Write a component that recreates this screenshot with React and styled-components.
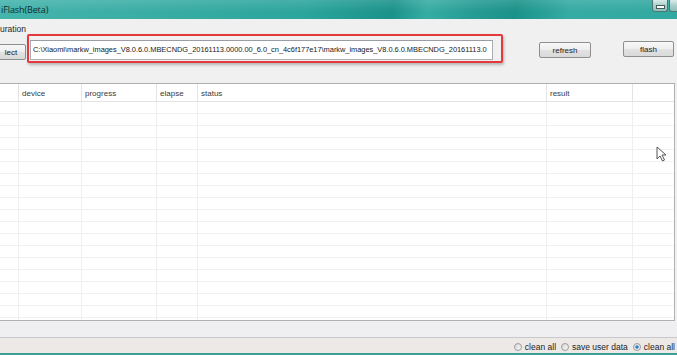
import React from "react";
import styled, { createGlobalStyle } from "styled-components";

const Global = createGlobalStyle`
  html, body { margin: 0; padding: 0; background: #f0f0f0; }
  body { font-family: "Liberation Sans", Arial, sans-serif; }
`;

const columns = [
  { w: 19, label: "" },
  { w: 63, label: "device" },
  { w: 75, label: "progress" },
  { w: 41, label: "elapse" },
  { w: 349, label: "status" },
  { w: 86, label: "result" },
  { w: 0, label: "" },
];
const template = columns.map((c) => (c.w ? `${c.w}px` : "1fr")).join(" ");
const rows = Array.from({ length: 19 });

export default function App() {
  return (
    <Window>
      <Global />
      <TitleBar>
        <Title>iFlash(Beta)</Title>
        <Controls>
          <CtrlButton>
            <MinGlyph />
          </CtrlButton>
          <CtrlButton narrow />
        </Controls>
      </TitleBar>
      <MenuBar>
        <MenuItem>uration</MenuItem>
      </MenuBar>
      <Toolbar>
        <Button width={30} top={10} left={-4}>lect</Button>
        <Highlight>
          <PathBox>
            C:\Xiaomi\markw_images_V8.0.6.0.MBECNDG_20161113.0000.00_6.0_cn_4c6f177e17\markw_images_V8.0.6.0.MBECNDG_20161113.0
          </PathBox>
        </Highlight>
        <Button width={52} top={8} left={36}>refresh</Button>
        <Button width={51} top={7} left={32}>flash</Button>
      </Toolbar>
      <Table>
        <HeaderRow>
          {columns.map((c, i) => (
            <HeadCell key={i} last={i === columns.length - 1}>{c.label}</HeadCell>
          ))}
        </HeaderRow>
        {rows.map((_, r) => (
          <Row key={r}>
            {columns.map((c, i) => (
              <Cell key={i} last={i === columns.length - 1} />
            ))}
          </Row>
        ))}
      </Table>
      <Band />
      <StatusBar>
        <Option>
          <Radio />
          clean all
        </Option>
        <Option>
          <Radio />
          save user data
        </Option>
        <Option>
          <Radio checked />
          clean all
        </Option>
      </StatusBar>
      <BottomEdge />
      <Cursor width="11" height="16" viewBox="0 0 11 16">
        <path d="M1 1 L1 13 L4 10 L6.5 15 L8.5 14 L6 9 L10 9 Z" fill="#fff" stroke="#555" strokeWidth="1" strokeLinejoin="round" />
      </Cursor>
    </Window>
  );
}

const Window = styled.div`
  position: relative;
  width: 677px;
  height: 355px;
  overflow: hidden;
  display: flex;
  flex-direction: column;
  background: #f0f0f0;
`;

const TitleBar = styled.div`
  height: 19px;
  flex: none;
  display: flex;
  align-items: flex-start;
  background:
    linear-gradient(180deg, rgba(255,255,255,0.12) 0%, rgba(255,255,255,0) 60%),
    linear-gradient(100deg, #45b4ac 0%, #38aca3 25%, #2ca59c 45%, #1a928a 58%, #37aca3 63%, #269b93 70%, #1b9289 76%, #35aba3 84%, #31a8a0 100%);
`;

const Title = styled.span`
  font-family: "Open Sans", "Liberation Sans", sans-serif;
  font-size: 9px;
  color: #0f2d2a;
  line-height: 19px;
  padding-left: 1px;
  letter-spacing: -0.1px;
`;

const Controls = styled.div`
  margin-left: auto;
  display: flex;
  gap: 1px;
  margin-right: -4px;
`;

const CtrlButton = styled.div`
  width: ${(p) => (p.narrow ? 12 : 16)}px;
  height: 12px;
  box-sizing: border-box;
  border: 1px solid #4f7672;
  border-top: none;
  border-radius: 0 0 3px 3px;
  background: linear-gradient(180deg, #d9ecea 0%, #a9cfcb 50%, #8fbeb9 100%);
  display: flex;
  align-items: center;
  justify-content: center;
`;

const MinGlyph = styled.span`
  width: 7px;
  height: 2px;
  background: #fff;
  border: 1px solid #44605d;
  margin-top: 2px;
`;

const MenuBar = styled.div`
  height: 15px;
  flex: none;
  display: flex;
  align-items: center;
  background: #f0f0f0;
`;

const MenuItem = styled.span`
  font-size: 8.5px;
  color: #1e1e1e;
  margin-top: 4px;
`;

const Toolbar = styled.div`
  height: 50px;
  flex: none;
  display: flex;
  align-items: flex-start;
  border-bottom: 1px solid #e6e6e6;
  box-sizing: border-box;
`;

const Button = styled.div`
  flex: none;
  width: ${(p) => p.width}px;
  height: 16px;
  margin-top: ${(p) => p.top}px;
  margin-left: ${(p) => p.left}px;
  box-sizing: border-box;
  border: 1px solid #8e8f8f;
  border-radius: 2px;
  background: linear-gradient(180deg, #f8f8f8 0%, #eeeeee 48%, #e2e2e2 52%, #d9d9d9 100%);
  font-size: 8px;
  color: #222;
  display: flex;
  align-items: center;
  justify-content: center;
  padding-top: 1px;
`;

const Highlight = styled.div`
  flex: none;
  width: 476px;
  height: 29px;
  margin-left: 1px;
  box-sizing: border-box;
  border: 2px solid #e4383d;
  border-radius: 2px;
  padding: 4px 8px 1px 1px;
  box-shadow: 1px 2px 3px rgba(0, 0, 0, 0.25);
  background: #f0f0f0;
`;

const PathBox = styled.div`
  height: 20px;
  box-sizing: border-box;
  border: 1px solid #abadb3;
  border-top-color: #9a9da3;
  background: #fff;
  font-size: 7.45px;
  letter-spacing: -0.03px;
  color: #1a1a1a;
  line-height: 18px;
  padding-left: 2px;
  white-space: nowrap;
  overflow: hidden;
`;

const Table = styled.div`
  margin-top: -1px;
  margin-left: -1px;
  margin-right: 2px;
  height: 238px;
  flex: none;
  box-sizing: border-box;
  border: 1px solid #b0b0b0;
  background: #fff;
  overflow: hidden;
`;

const HeaderRow = styled.div`
  display: grid;
  grid-template-columns: ${template};
  height: 18px;
  border-bottom: 1px solid #e3e3e3;
  box-sizing: border-box;
`;

const HeadCell = styled.div`
  font-size: 8px;
  color: #3a3a3a;
  padding: 1px 0 0 3px;
  line-height: 17px;
  border-right: ${(p) => (p.last ? "none" : "1px solid #e4e4e4")};
`;

const Row = styled.div`
  display: grid;
  grid-template-columns: ${template};
  height: 12px;
  border-bottom: 1px solid #f1f1f4;
  box-sizing: border-box;
`;

const Cell = styled.div`
  border-right: ${(p) => (p.last ? "none" : "1px solid #efeff2")};
`;

const Band = styled.div`
  height: 17px;
  flex: none;
  background: #efeff1;
  border-bottom: 1px solid #c9c9cb;
  box-sizing: border-box;
`;

const StatusBar = styled.div`
  height: 15px;
  flex: none;
  display: flex;
  align-items: center;
  justify-content: flex-end;
  gap: 5px;
  padding-right: 2px;
  background: #ece9e7;
`;

const Option = styled.label`
  display: flex;
  align-items: center;
  gap: 3px;
  font-size: 8.5px;
  color: #1e1e1e;
  margin-top: 2px;
`;

const Radio = styled.span`
  width: 8px;
  height: 8px;
  border-radius: 50%;
  box-sizing: border-box;
  border: 1px solid #9c9c9c;
  background: ${(p) =>
    p.checked
      ? "radial-gradient(circle, #2f6fb5 0%, #4a8fd0 35%, #e8eef5 45%, #dcdcdc 100%)"
      : "linear-gradient(135deg, #d8d8d8 0%, #f8f8f8 100%)"};
`;

const BottomEdge = styled.div`
  height: 2px;
  flex: none;
  background: #3c9f98;
`;

const Cursor = styled.svg`
  position: absolute;
  left: 656px;
  top: 146px;
`;
